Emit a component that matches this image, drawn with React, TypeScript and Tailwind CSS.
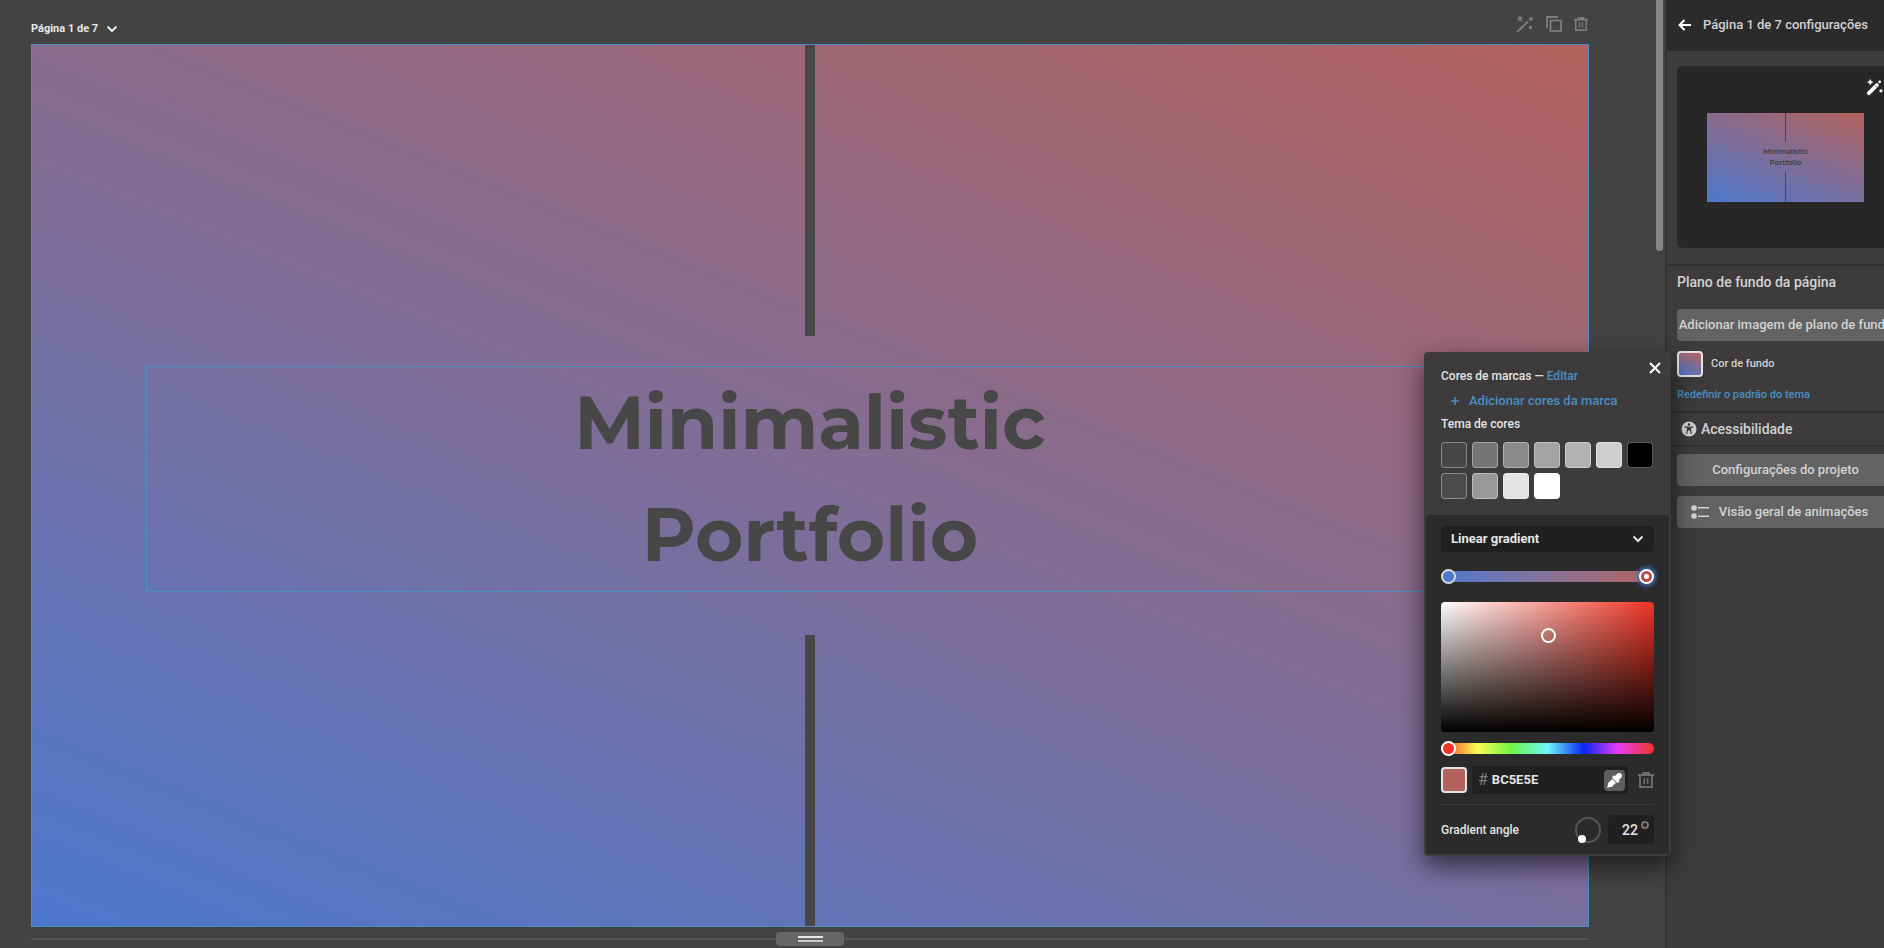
import { useState } from "react";
import { clsx } from "clsx";
import { FaEyeDropper } from "react-icons/fa";

const themeColors = [
    "bg-[#474747]",
    "bg-[#757575]",
    "bg-[#8a8a8a]",
    "bg-[#a3a3a3]",
    "bg-[#b2b2b2]",
    "bg-[#cfcfcf]",
    "bg-black",
    "bg-[#4c4c4c]",
    "bg-[#999999]",
    "bg-[#e4e4e4]",
    "bg-white",
];

const pageGradient = "bg-[linear-gradient(22deg,#4d78ce,#b3625e)]";

const rangeBase =
    "h-[11px] w-full cursor-pointer appearance-none rounded-full outline-none [&::-webkit-slider-thumb]:size-[15px] [&::-webkit-slider-thumb]:appearance-none [&::-webkit-slider-thumb]:rounded-full [&::-webkit-slider-thumb]:border-2 [&::-webkit-slider-thumb]:border-solid";

function Chevron({ className }: { className?: string }) {
    return (
        <svg viewBox="0 0 12 8" className={className} fill="none" stroke="currentColor" strokeWidth="2">
            <path d="M1.5 1.5 6 6l4.5-4.5" />
        </svg>
    );
}

function TrashIcon({ className }: { className?: string }) {
    return (
        <svg viewBox="0 0 16 16" className={className} fill="none" stroke="currentColor">
            <path d="M0 3h16M5 2.5V1h6v1.5M2 3v12h12V3" strokeWidth="1.8" />
            <path d="M6.3 6v6M9.7 6v6" strokeWidth="1.5" />
        </svg>
    );
}

function CopyIcon({ className }: { className?: string }) {
    return (
        <svg viewBox="0 0 16 16" className={className} fill="none" stroke="currentColor" strokeWidth="1.8">
            <path d="M1 12V1h11" />
            <rect x="4.5" y="4.5" width="10.5" height="10.5" />
        </svg>
    );
}

function StarsWandIcon({ className }: { className?: string }) {
    return (
        <svg viewBox="0 0 18 18" className={className} fill="currentColor">
            <path d="M1 17 12 6.5" stroke="currentColor" strokeWidth="2.2" />
            <path d="m4 .3 1 2 2.2.3-1.6 1.6.4 2.2-2-1-2 1 .4-2.2L.8 2.6 3 2.3z" />
            <path d="m15 1 .8 1.7 1.9.3-1.4 1.3.3 1.9-1.6-.9-1.7.9.3-1.9L12.300 3l1.900-.3z" />
            <circle cx="14.5" cy="12.5" r="1.8" />
        </svg>
    );
}

function WandIcon({ className }: { className?: string }) {
    return (
        <svg viewBox="0 0 18 18" className={className} fill="currentColor">
            <path d="M3 15 11.6 6.4" stroke="currentColor" strokeWidth="4" strokeLinecap="round" />
            <path d="m10 7.5 1.5 1.5" stroke="#272727" strokeWidth=".8" />
            <path d="m4.500.5.9 1.900 1.900.9-1.900.9-.9 1.900-.9-1.900-1.900-.9 1.900-.9z" stroke="currentColor" strokeWidth=".6" />
            <circle cx="14.5" cy="3" r="1.5" />
            <circle cx="15.8" cy="12.5" r="1.7" />
        </svg>
    );
}

function AccessibilityIcon({ className }: { className?: string }) {
    return (
        <svg viewBox="0 0 16 16" className={className}>
            <circle cx="8" cy="8" r="7.5" fill="currentColor" />
            <g fill="none" stroke="#3d3b3b" strokeWidth="1.2">
                <circle cx="8" cy="3.6" r="1.3" fill="#3d3b3b" stroke="none" />
                <path d="M3.6 5.7 6.5 6.4v2.2L5.6 13M12.4 5.7 9.5 6.4v2.2l.9 4.4" />
                <path d="M6.5 6.4h3V9h-3z" fill="#3d3b3b" />
            </g>
        </svg>
    );
}

function PageArt({ small }: { small?: boolean }) {
    const bar = clsx("flex-[291] bg-[#474747]", small ? "w-px" : "w-[10px]");
    const title = (
        <>
            Minimalistic
            <br />
            Portfolio
        </>
    );

    return (
        <>
            <div className={bar} />
            <div
                className={clsx(
                    "flex w-full items-center justify-center text-center font-['Montserrat','Inter',sans-serif] font-bold text-[#474747]",
                    small ? "flex-[301] text-[7px] leading-[11px]" : "flex-[285] px-[114px] pb-[14px]"
                )}
            >
                {small ? (
                    <p>{title}</p>
                ) : (
                    <h1 className="w-full border border-[#4a8fc4] text-[74px] leading-[112px]">{title}</h1>
                )}
            </div>
            <div className={bar} />
        </>
    );
}

function ColorPopup() {
    const [hex, setHex] = useState("BC5E5E");
    const [angle, setAngle] = useState("22");

    return (
        <div
            role="dialog"
            aria-label="Cor de fundo"
            className="absolute top-[352px] right-[213px] w-[247px] rounded border-2 border-[#3d3b3b] bg-[#3d3b3b] text-xs font-medium text-[#e4e4e4] shadow-[0_10px_26px_rgba(0,0,0,0.6)]"
        >
            <button aria-label="Fechar" className="absolute top-1 right-1 p-1 text-white">
                <svg viewBox="0 0 12 12" className="size-3" stroke="currentColor" strokeWidth="2">
                    <path d="m1 1 10 10M11 1 1 11" />
                </svg>
            </button>

            <div className="px-[15px] pt-[14px] pb-4">
                <p className="leading-4">
                    Cores de marcas — <a href="#editar" className="text-[#4a8fc4]">Editar</a>
                </p>
                <button className="mt-[9px] ml-[10px] flex items-center gap-[10px] text-[13px] leading-4 text-[#4a8fc4]">
                    <svg viewBox="0 0 8 8" className="size-2" stroke="currentColor" strokeWidth="1.5">
                        <path d="M4 0v8M0 4h8" />
                    </svg>
                    Adicionar cores da marca
                </button>
                <p className="mt-[7px] leading-4">Tema de cores</p>
                <div className="mt-[10px] flex flex-wrap gap-[5px]">
                    {themeColors.map((color) => (
                        <button
                            key={color}
                            aria-label="Cor do tema"
                            className={clsx("size-[26px] rounded border border-white/35", color)}
                        />
                    ))}
                </div>
            </div>

            <div className="rounded-t bg-[#2b2b2b] px-[15px] pt-[11px] pb-[10px]">
                <div className="relative">
                    <select
                        aria-label="Tipo de preenchimento"
                        className="h-[26px] w-full appearance-none rounded bg-[#202020] px-[10px] text-[13px] font-bold outline-none"
                    >
                        <option>Linear gradient</option>
                    </select>
                    <Chevron className="pointer-events-none absolute top-[9px] right-[10px] h-2 w-3" />
                </div>

                <div className="mt-[19px] flex h-[11px] rounded-full bg-linear-to-r from-[#4d78ce] to-[#b3625e]">
                    <input
                        type="range"
                        aria-label="Cor inicial"
                        defaultValue={0}
                        className={clsx(rangeBase, "[&::-webkit-slider-thumb]:border-[#d8d8d8] [&::-webkit-slider-thumb]:bg-[#4d78ce]")}
                    />
                    <input
                        type="range"
                        aria-label="Cor final"
                        defaultValue={100}
                        className={clsx(
                            rangeBase,
                            "[&::-webkit-slider-thumb]:border-white [&::-webkit-slider-thumb]:bg-[radial-gradient(circle,#fff_2px,#b3504e_3px)] [&::-webkit-slider-thumb]:shadow-[0_0_4px_2px_#3f6fc0]"
                        )}
                    />
                </div>

                <div className="relative mt-5 h-[130px] rounded bg-[linear-gradient(to_top,#000,transparent),linear-gradient(to_right,#fff,#ee3424)]">
                    <button
                        aria-label="Saturação e brilho"
                        className="absolute top-[26px] left-[100px] size-[15px] rounded-full border-2 border-white"
                    />
                </div>

                <div className="mt-[11px] flex">
                    <input
                        type="range"
                        aria-label="Matiz"
                        defaultValue={0}
                        max={360}
                        className={clsx(
                            rangeBase,
                            "bg-[linear-gradient(to_right,#ee3424,#fdfb54_17%,#6df545_33%,#6ff8fb_50%,#0a25f5_67%,#e83cf7_83%,#ee3424)] [&::-webkit-slider-thumb]:border-white [&::-webkit-slider-thumb]:bg-[#ee3424]"
                        )}
                    />
                </div>

                <div className="mt-3 flex items-center">
                    <span className="size-[26px] rounded border-2 border-[#e4e4e4] bg-[#b3625e]" />
                    <div className="ml-[5px] flex h-7 w-[156px] items-center rounded bg-[#202020] pr-[3px] pl-[6px] text-[13px]">
                        <label htmlFor="hex" className="text-base font-normal text-[#7d7d7d]">#</label>
                        <input
                            id="hex"
                            value={hex}
                            onChange={(e) => setHex(e.target.value)}
                            className="ml-1 w-0 flex-1 bg-transparent font-bold outline-none"
                        />
                        <button aria-label="Conta-gotas" className="flex size-[21px] items-center justify-center rounded bg-[#5e5e5e] text-white">
                            <FaEyeDropper className="size-[15px]" />
                        </button>
                    </div>
                    <button aria-label="Excluir" className="ml-auto text-[#6e6e6e]">
                        <TrashIcon className="size-4" />
                    </button>
                </div>

                <div className="mt-[10px] flex items-center border-t border-[#3a3a3a] pt-[10px]">
                    <label htmlFor="angle">Gradient angle</label>
                    <svg viewBox="0 0 26 26" className="ml-auto size-[26px]">
                        <circle cx="13" cy="13" r="12" fill="none" stroke="#555" strokeWidth="2" />
                        <circle cx="7" cy="22" r="4" fill="#fff" />
                    </svg>
                    <div className="relative ml-[7px]">
                        <input
                            id="angle"
                            value={angle}
                            onChange={(e) => setAngle(e.target.value)}
                            className="h-[29px] w-[46px] rounded bg-[#202020] pl-[14px] text-sm outline-none"
                        />
                        <span className="absolute top-[6px] right-[5px] size-2 rounded-full border-2 border-[#777]" />
                    </div>
                </div>
            </div>
        </div>
    );
}

function Sidebar() {
    const button =
        "flex h-8 w-full items-center justify-center rounded bg-[#636363] text-[13px] font-medium whitespace-nowrap text-[#d2d2d2]";

    return (
        <aside className="w-[219px] shrink-0 overflow-hidden border-l-2 border-[#333] bg-[#3d3b3b] text-[#d2d2d2]">
            <div className="w-[237px]">
                <header className="flex h-[51px] items-center gap-3 bg-[#2b2b2b] px-[11px] pb-[2px]">
                    <button aria-label="Voltar" className="text-white">
                        <svg viewBox="0 0 13 12" className="h-3 w-[13px]" fill="none" stroke="currentColor" strokeWidth="2">
                            <path d="M13 6H2M6.5 1 1.5 6l5 5" />
                        </svg>
                    </button>
                    <h2 className="text-[13px] font-medium">Página 1 de 7 configurações</h2>
                </header>

                <div className="px-[10px] pt-[15px] pb-4">
                    <div className="relative flex h-[182px] items-center justify-center rounded-md bg-[#272727]">
                        <div className={clsx("flex h-[89px] w-[157px] flex-col items-center", pageGradient)}>
                            <PageArt small />
                        </div>
                        <button aria-label="Estilo mágico" className="absolute top-[13px] right-[11px] text-white">
                            <WandIcon className="size-[17px]" />
                        </button>
                    </div>
                </div>

                <section className="border-t-2 border-[#313131] px-[10px] pt-[6px] pb-2">
                    <h3 className="text-sm leading-5 font-medium">Plano de fundo da página</h3>
                    <button className={clsx(button, "mt-[17px]")}>Adicionar imagem de plano de fundo</button>
                    <button className="mt-[10px] flex items-center gap-2 text-[11px] font-medium">
                        <span className={clsx("size-[26px] rounded border-2 border-[#e4e4e4]", pageGradient)} />
                        Cor de fundo
                    </button>
                    <a href="#redefinir" className="mt-[10px] block text-[11px] leading-4 font-medium text-[#4a8fc4]">
                        Redefinir o padrão do tema
                    </a>
                </section>

                <button className="flex h-9 w-full items-center gap-1 border-y-2 border-[#313131] pr-2 pl-[14px] text-sm font-medium">
                    <AccessibilityIcon className="size-4" />
                    Acessibilidade
                    <Chevron className="ml-auto h-2 w-3" />
                </button>

                <div className="flex flex-col gap-[10px] px-[10px] pt-[7px]">
                    <button className={button}>Configurações do projeto</button>
                    <button className={clsx(button, "gap-[10px] pr-3")}>
                        <svg viewBox="0 0 18 14" className="h-[14px] w-[18px]" fill="currentColor">
                            <circle cx="3" cy="3" r="2.8" />
                            <circle cx="3" cy="11" r="2.8" />
                            <path d="M7 2h11v1.5H7zM7 10.5h11V12H7z" />
                        </svg>
                        Visão geral de animações
                    </button>
                </div>
            </div>
        </aside>
    );
}

export default function App() {
    return (
        <div className="relative flex h-screen overflow-hidden bg-[#434343] font-['Roboto',sans-serif]">
            <main className="flex min-w-0 flex-1 flex-col pr-[67px] pl-[31px]">
                <div className="flex h-11 items-center justify-between pt-1">
                    <button className="flex items-center gap-2 pt-[10px] text-[11px] font-bold text-[#e8e8e8]">
                        Página 1 de 7
                        <Chevron className="h-2 w-3" />
                    </button>
                    <div className="flex items-center gap-3 text-[#7c7c7c]">
                        <button aria-label="Estilo mágico"><StarsWandIcon className="size-[18px]" /></button>
                        <button aria-label="Duplicar página"><CopyIcon className="size-4" /></button>
                        <button aria-label="Excluir página" className="mr-px"><TrashIcon className="size-[14px]" /></button>
                    </div>
                </div>
                <div className={clsx("flex flex-1 flex-col items-center border border-[#4a8fc4]", pageGradient)}>
                    <PageArt />
                </div>
                <div className="flex h-[21px] items-center pt-[3px]">
                    <div className="h-[2px] flex-1 bg-[#555]" />
                    <button aria-label="Redimensionar página" className="flex h-[14px] w-[68px] flex-col items-center justify-center gap-[2px] rounded bg-[#666]">
                        <span className="h-[2px] w-[25px] bg-[#e4e4e4]" />
                        <span className="h-[2px] w-[25px] bg-[#c8c8c8]" />
                    </button>
                    <div className="h-[2px] flex-1 bg-[#555]" />
                </div>
            </main>
            <div className="mr-[2px] w-[7px] shrink-0">
                <div className="h-[251px] rounded-b-full bg-[#858585]" />
            </div>
            <Sidebar />
            <ColorPopup />
        </div>
    );
}
